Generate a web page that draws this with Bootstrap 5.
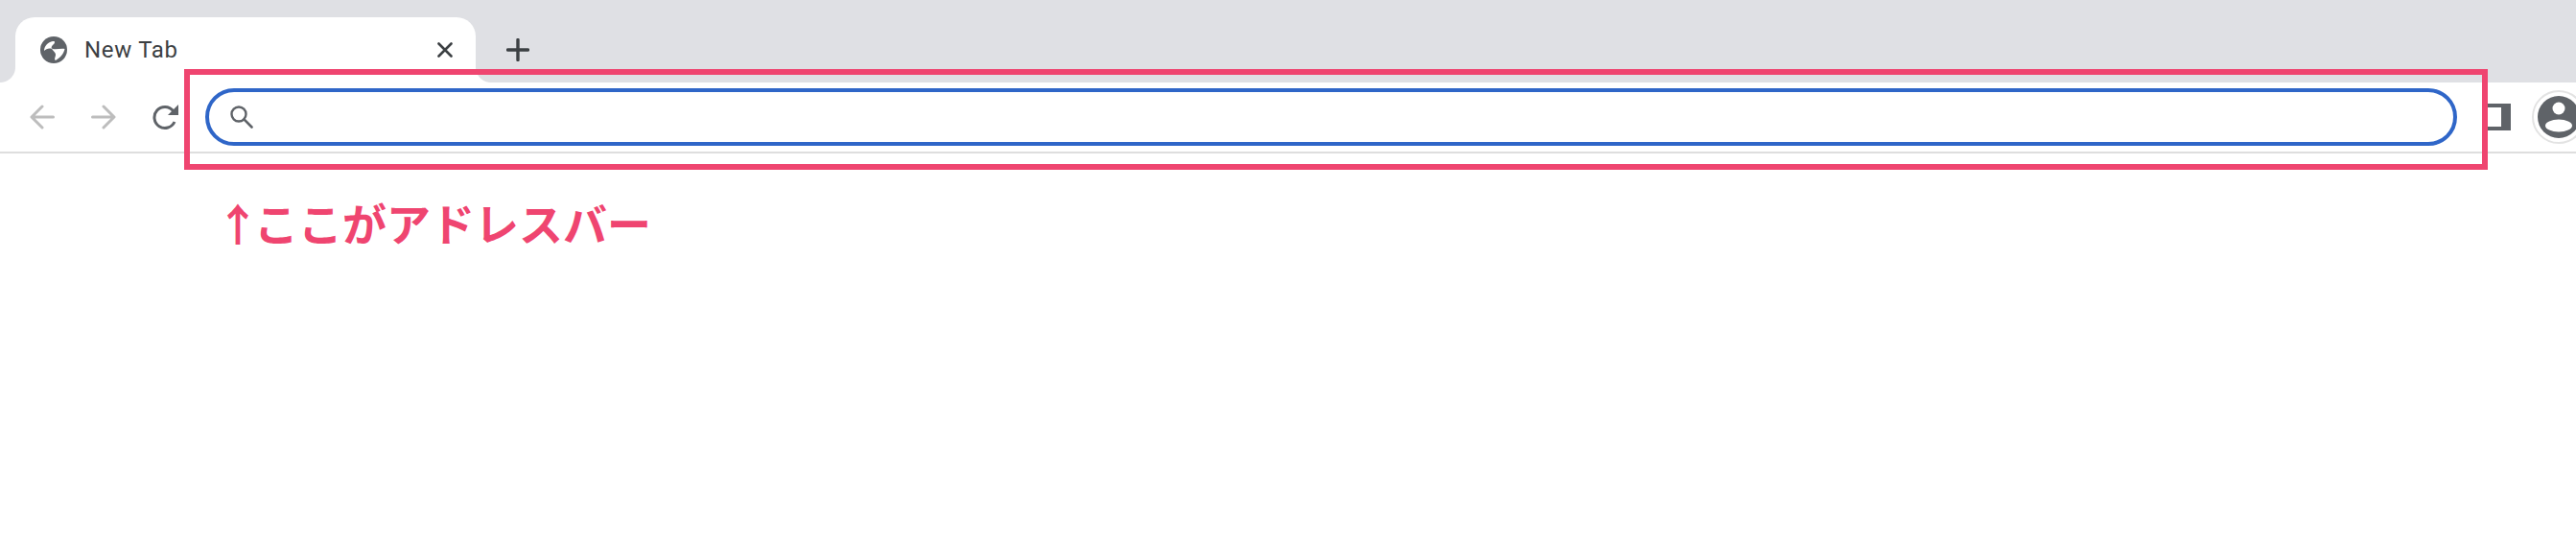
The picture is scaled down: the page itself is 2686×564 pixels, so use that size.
<!doctype html>
<html lang="ja">
<head>
<meta charset="utf-8">
<title>New Tab</title>
<link href="https://cdn.jsdelivr.net/npm/bootstrap@5.3.0/dist/css/bootstrap.min.css" rel="stylesheet">
<style>
html, body { height: 100%; }
body { background: #fff; overflow: hidden; position: relative; }
.strip { height: 86px; background: #dfe0e4; padding-left: 16px; }
.tabshape { position: relative; width: 480px; height: 68px; margin-top: 18px; background: #fff; border-radius: 20px 20px 0 0; padding: 0 24px 0 26px; }
.tabshape::before, .tabshape::after { content: ""; position: absolute; bottom: 0; width: 16px; height: 16px; }
.tabshape::before { left: -16px; background: radial-gradient(circle at 0 0, #dfe0e4 15.5px, #fff 16.5px); }
.tabshape::after { right: -16px; background: radial-gradient(circle at 100% 0, #dfe0e4 15.5px, #fff 16.5px); }
.tabtitle { font-family: Roboto, "Liberation Sans", sans-serif; font-size: 24px; line-height: 1; color: #3c4043; margin-left: 18px; letter-spacing: .7px; }
.plusbtn { margin-left: 32px; margin-top: 18px; height: 68px; }
.toolbar { height: 74px; border-bottom: 2px solid #dedede; padding-left: 31px; }
.navgap { margin-left: 38px; }
.pill { width: 2348px; height: 60px; margin-left: 28px; border: 4px solid #2f66c8; border-radius: 30px; padding-left: 22px; background: #fff; }
.sideicon { margin-left: 26px; }
.avatarring { width: 56px; height: 56px; margin-left: 22px; border: 2px solid #e3e3e3; border-radius: 50%; flex-shrink: 0; padding: 4px; }
.redframe { position: absolute; left: 192px; top: 72px; width: 2402px; height: 105px; border: 6px solid #ef4570; }
.caption { font-family: "Noto Sans CJK JP", sans-serif; font-weight: 700; font-size: 46px; line-height: 1; color: #ef4570; margin: 48px 0 0 225px; white-space: nowrap; }
.arrowch { letter-spacing: -6px; }
</style>
</head>
<body class="m-0">
<div class="strip d-flex align-items-start">
  <div class="tabshape d-flex align-items-center">
    <svg width="28" height="28" viewBox="0 0 28 28" class="flex-shrink-0"><circle cx="14" cy="14" r="14" fill="#5f6368"/><path d="M4 15C4 10 8 6 13 5c3-.5 2 2 1 3-2 2-3 3-2 5-3-1-6 0-8 2z" fill="#fff"/><path d="M12 12.500c4 2 9-.5 13.500.5-1 5-4.500 9-9.500 12-2-1 0-4 0-6 0-3-3-3.500-4-6.500z" fill="#fff"/></svg>
    <span class="tabtitle flex-grow-1">New Tab</span>
    <svg width="16" height="16" viewBox="0 0 16 16"><path d="M1.500 1.500l13 13M14.500 1.500l-13 13" stroke="#3c4043" stroke-width="2.600" stroke-linecap="round"/></svg>
  </div>
  <div class="plusbtn d-flex align-items-center">
    <svg width="24" height="24" viewBox="0 0 24 24"><path d="M12 1.500v21M1.500 12h21" stroke="#3c4043" stroke-width="3.400" stroke-linecap="round"/></svg>
  </div>
</div>
<div class="toolbar d-flex align-items-center">
  <svg width="26" height="26" viewBox="0 0 26 26" class="flex-shrink-0"><path d="M24.500 13H2.500M13 2L2 13l11 11" fill="none" stroke="#bdbdbd" stroke-width="3" stroke-linecap="round" stroke-linejoin="round"/></svg>
  <svg width="26" height="26" viewBox="0 0 26 26" class="flex-shrink-0 navgap"><path d="M1.500 13h22M13 2l11 11-11 11" fill="none" stroke="#bdbdbd" stroke-width="3" stroke-linecap="round" stroke-linejoin="round"/></svg>
  <svg width="27" height="27" viewBox="0 0 27 27" class="flex-shrink-0 navgap"><path d="M23 18a11 11 0 1 1-1.500-11.500" fill="none" stroke="#5f6368" stroke-width="3"/><path d="M27 0v11H16z" fill="#5f6368"/></svg>
  <div class="pill d-flex align-items-center flex-shrink-0">
    <svg width="24" height="24" viewBox="0 0 24 24"><circle cx="9" cy="9" r="7.500" fill="none" stroke="#5f6368" stroke-width="2.400"/><path d="M14.500 14.500l8 8" stroke="#5f6368" stroke-width="2.600" stroke-linecap="round"/></svg>
  </div>
  <svg width="30" height="28" viewBox="0 0 30 28" class="flex-shrink-0 sideicon"><path d="M0 0h30v28H0v-4h20V4H0z" fill="#5f6368"/></svg>
  <div class="avatarring">
    <svg width="44" height="44" viewBox="0 0 44 44" class="d-block"><circle cx="22" cy="22" r="22" fill="#5f6368"/><circle cx="22" cy="13" r="6.500" fill="#fff"/><ellipse cx="22" cy="31" rx="14" ry="6.500" fill="#fff"/></svg>
  </div>
</div>
<p class="caption"><span class="arrowch">↑</span>ここがアドレスバー</p>
<div class="redframe"></div>
</body>
</html>
